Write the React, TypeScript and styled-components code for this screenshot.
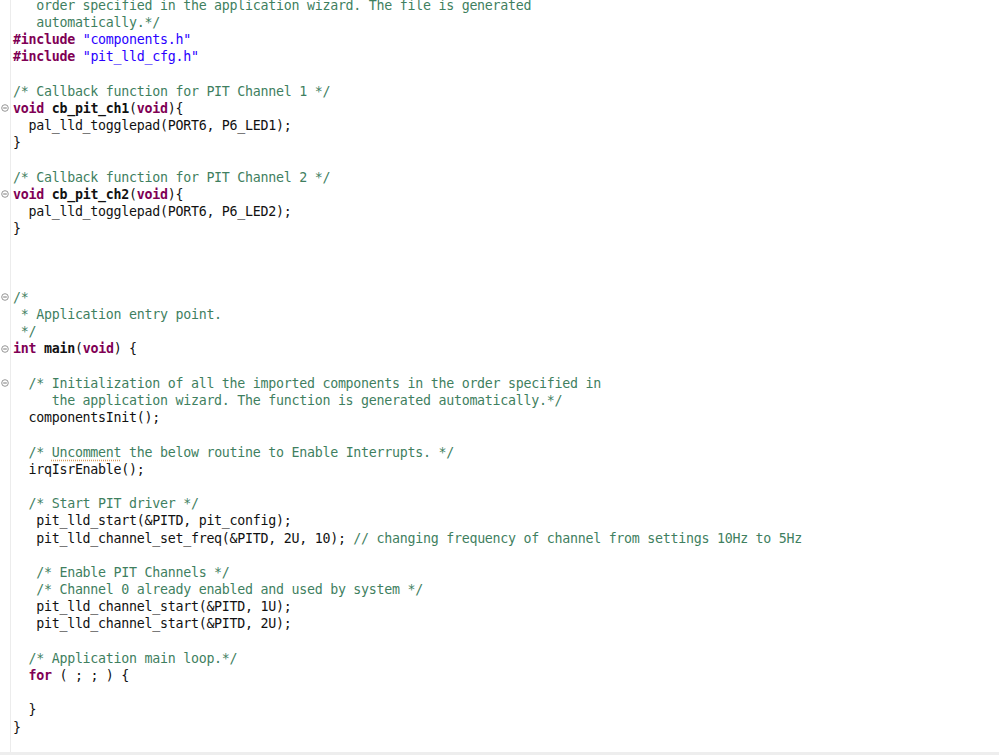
import React from "react";
import styled, { createGlobalStyle } from "styled-components";

const Global = createGlobalStyle`
  html, body { margin: 0; padding: 0; background: #ffffff; }
  body { overflow: hidden; }
`;

type Kind = "t" | "c" | "k" | "s" | "f" | "u";
type Tok = [Kind, string];
type LineDef = { fold?: boolean; toks: Tok[] };

const L = (toks: Tok[], fold = false): LineDef => ({ toks, fold });

const lines: LineDef[] = [
  L([["c", "   order specified in the application wizard. The file is generated"]]),
  L([["c", "   automatically.*/"]]),
  L([["k", "#include"], ["t", " "], ["s", "\"components.h\""]]),
  L([["k", "#include"], ["t", " "], ["s", "\"pit_lld_cfg.h\""]]),
  L([]),
  L([["c", "/* Callback function for PIT Channel 1 */"]]),
  L([["k", "void"], ["t", " "], ["f", "cb_pit_ch1"], ["t", "("], ["k", "void"], ["t", "){"]], true),
  L([["t", "  pal_lld_togglepad(PORT6, P6_LED1);"]]),
  L([["t", "}"]]),
  L([]),
  L([["c", "/* Callback function for PIT Channel 2 */"]]),
  L([["k", "void"], ["t", " "], ["f", "cb_pit_ch2"], ["t", "("], ["k", "void"], ["t", "){"]], true),
  L([["t", "  pal_lld_togglepad(PORT6, P6_LED2);"]]),
  L([["t", "}"]]),
  L([]),
  L([]),
  L([]),
  L([["c", "/*"]], true),
  L([["c", " * Application entry point."]]),
  L([["c", " */"]]),
  L([["k", "int"], ["t", " "], ["f", "main"], ["t", "("], ["k", "void"], ["t", ") {"]], true),
  L([]),
  L([["c", "  /* Initialization of all the imported components in the order specified in"]], true),
  L([["c", "     the application wizard. The function is generated automatically.*/"]]),
  L([["t", "  componentsInit();"]]),
  L([]),
  L([["c", "  /* "], ["u", "Uncomment"], ["c", " the below routine to Enable Interrupts. */"]]),
  L([["t", "  irqIsrEnable();"]]),
  L([]),
  L([["c", "  /* Start PIT driver */"]]),
  L([["t", "   pit_lld_start(&PITD, pit_config);"]]),
  L([["t", "   pit_lld_channel_set_freq(&PITD, 2U, 10); "], ["c", "// changing frequency of channel from settings 10Hz to 5Hz"]]),
  L([]),
  L([["c", "   /* Enable PIT Channels */"]]),
  L([["c", "   /* Channel 0 already enabled and used by system */"]]),
  L([["t", "   pit_lld_channel_start(&PITD, 1U);"]]),
  L([["t", "   pit_lld_channel_start(&PITD, 2U);"]]),
  L([]),
  L([["c", "  /* Application main loop.*/"]]),
  L([["t", "  "], ["k", "for"], ["t", " ( ; ; ) {"]]),
  L([]),
  L([["t", "  }"]]),
  L([["t", "}"]]),
  L([]),
  L([]),
];

const Page = styled.div`
  display: flex;
  flex-direction: column;
  width: 999px;
  height: 755px;
  background: #ffffff;
  overflow: hidden;
`;

const Editor = styled.div`
  flex: 1;
  overflow: hidden;
  display: flex;
  flex-direction: column;
`;

const Scroller = styled.div`
  display: flex;
  flex-direction: column;
  margin-top: -3.3px;
`;

const Row = styled.div`
  display: flex;
  flex: none;
  height: 17.2px;
  align-items: center;
`;

const Gutter = styled.div`
  width: 10px;
  height: 100%;
  flex: none;
  border-right: 1px solid #ececec;
  display: flex;
  align-items: center;
  justify-content: center;
  box-sizing: content-box;
`;

const Code = styled.pre`
  margin: 0;
  padding-left: 2px;
  font-family: "DejaVu Sans Mono", "Liberation Mono", monospace;
  font-size: 13.3px;
  letter-spacing: -0.27px;
  line-height: 17.2px;
  color: #111111;
  white-space: pre;
`;

const Span = styled.span<{ $k: Kind }>`
  color: ${(p) =>
    p.$k === "c" || p.$k === "u"
      ? "#3f7f5f"
      : p.$k === "k"
      ? "#7f0055"
      : p.$k === "s"
      ? "#2a00ff"
      : "#111111"};
  font-weight: ${(p) => (p.$k === "k" || p.$k === "f" ? 700 : 400)};
  text-decoration: ${(p) => (p.$k === "u" ? "underline dotted #d8a060" : "none")};
  text-underline-offset: 3px;
`;

const BottomBar = styled.div`
  height: 3px;
  flex: none;
  background: #eeeeee;
`;

const FoldIcon = () => (
  <svg width="8" height="8" viewBox="0 0 8 8">
    <circle cx="4" cy="4" r="3.3" fill="#fff" stroke="#8a8a8a" strokeWidth="0.9" />
    <line x1="2.2" y1="4" x2="5.8" y2="4" stroke="#6a6a6a" strokeWidth="0.9" />
  </svg>
);

export default function App() {
  return (
    <>
      <Global />
      <Page>
        <Editor>
          <Scroller>
            {lines.map((ln, i) => (
              <Row key={i}>
                <Gutter>{ln.fold ? <FoldIcon /> : null}</Gutter>
                <Code>
                  {ln.toks.map(([k, t], j) => (
                    <Span key={j} $k={k}>
                      {t}
                    </Span>
                  ))}
                </Code>
              </Row>
            ))}
          </Scroller>
        </Editor>
        <BottomBar />
      </Page>
    </>
  );
}
